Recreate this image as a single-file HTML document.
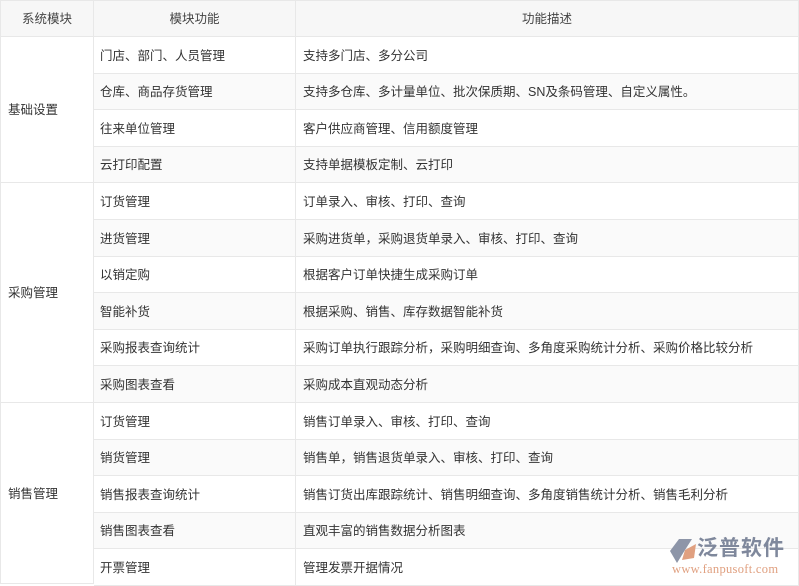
<!DOCTYPE html>
<html><head><meta charset="utf-8"><style>
body{margin:0;width:799px;height:584px;overflow:hidden;background:#fff;font-family:"Liberation Sans","Noto Sans CJK SC",sans-serif;font-size:12.5px;color:#333;position:relative}
.c{position:absolute;box-sizing:border-box;border-right:1px solid #e8e8e8;border-bottom:1px solid #e8e8e8;display:flex;align-items:center;white-space:nowrap;padding-bottom:2px}
.h{background:#f7f7f7;justify-content:center;color:#444}
.g{background:#fafafa}
</style></head><body>
<div class="c h" style="left:0;top:0;width:94px;height:37px;border-left:1px solid #e8e8e8;border-top:1px solid #e8e8e8">系统模块</div>
<div class="c h" style="left:94px;top:0;width:202px;height:37px;border-top:1px solid #e8e8e8">模块功能</div>
<div class="c h" style="left:296px;top:0;width:503px;height:37px;border-top:1px solid #e8e8e8">功能描述</div>
<div class="c" style="left:0;top:37px;width:94px;height:146px;padding-left:7px;border-left:1px solid #e8e8e8">基础设置</div>
<div class="c" style="left:0;top:183px;width:94px;height:220px;padding-left:7px;border-left:1px solid #e8e8e8">采购管理</div>
<div class="c" style="left:0;top:403px;width:94px;height:181px;padding-left:7px;border-left:1px solid #e8e8e8">销售管理</div>
<div id="rows"></div>
<script>
var r=[["门店、部门、人员管理","支持多门店、多分公司"],["仓库、商品存货管理","支持多仓库、多计量单位、批次保质期、SN及条码管理、自定义属性。"],["往来单位管理","客户供应商管理、信用额度管理"],["云打印配置","支持单据模板定制、云打印"],["订货管理","订单录入、审核、打印、查询"],["进货管理","采购进货单，采购退货单录入、审核、打印、查询"],["以销定购","根据客户订单快捷生成采购订单"],["智能补货","根据采购、销售、库存数据智能补货"],["采购报表查询统计","采购订单执行跟踪分析，采购明细查询、多角度采购统计分析、采购价格比较分析"],["采购图表查看","采购成本直观动态分析"],["订货管理","销售订单录入、审核、打印、查询"],["销货管理","销售单，销售退货单录入、审核、打印、查询"],["销售报表查询统计","销售订货出库跟踪统计、销售明细查询、多角度销售统计分析、销售毛利分析"],["销售图表查看","直观丰富的销售数据分析图表"],["开票管理","管理发票开据情况"]];
var h='';for(var i=0;i<r.length;i++){var t=Math.round(37+i*36.6),b=Math.round(37+(i+1)*36.6),g=i%2==1?' g':'';
h+='<div class="c'+g+'" style="left:94px;top:'+t+'px;width:202px;height:'+(b-t)+'px;padding-left:6px">'+r[i][0]+'</div>';
h+='<div class="c'+g+'" style="left:296px;top:'+t+'px;width:503px;height:'+(b-t)+'px;padding-left:7px">'+r[i][1]+'</div>';}
document.getElementById('rows').innerHTML=h;
</script>
<div style="position:absolute;left:668px;top:536px;width:131px;height:48px">
<svg width="28" height="24" style="position:absolute;left:2px;top:3px" viewBox="0 0 28 24"><path d="M9 0 L22 0 L15 11 L7 24 L0 12 Z" fill="#8d95a8"/><path d="M15 11 L26 5 L24 19 L12 21 Z" fill="#e0a080"/></svg>
<div style="position:absolute;left:29px;top:0px;font-size:21px;font-weight:bold;color:#7f889c;letter-spacing:1px;line-height:26px">泛普软件</div>
<div style="position:absolute;left:4px;top:26px;font-size:12.5px;color:#e0a080;font-family:'Liberation Serif',serif;line-height:14px;letter-spacing:0.3px">www.fanpusoft.com</div>
</div>
</body></html>
